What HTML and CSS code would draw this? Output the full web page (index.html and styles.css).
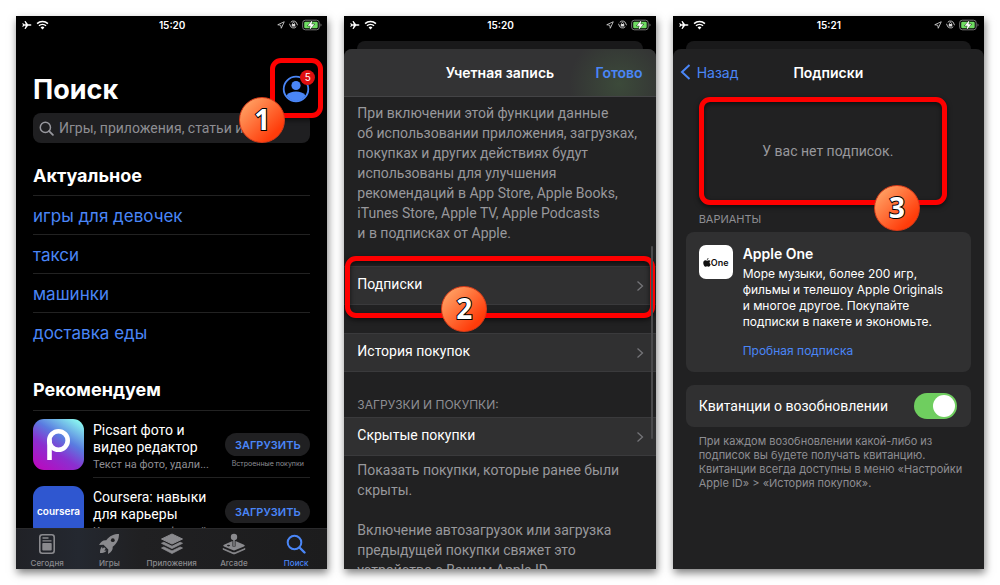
FILE: index.html
```html
<!DOCTYPE html>
<html lang="ru">
	<head>
		<meta charset="UTF-8">
		<title>Подписки</title>
		<link rel="stylesheet" href="styles.css">
	</head>
	
	<body>
		<!-- общие иконки -->
		<svg class="sprite">
			<symbol id="plane" viewBox="0 0 20 20">
				<path d="M19 10c0-1-1.500-1.500-3-1.500h-4L7 2H5l2.500 6.500H4L2 6H.8L1.800 10 .8 14H2l2-2.500h3.500L5 18h2l5-6.500h4c1.500 0 3-.5 3-1.500z" fill="#fff"/>
			</symbol>
			<symbol id="wifi" viewBox="0 0 24 18">
				<path d="M2 6.500a14.500 14.500 0 0 1 20 0M5.500 10.500a9.500 9.500 0 0 1 13 0" fill="none" stroke="#fff" stroke-width="2.800"/>
				<path d="M12 17.500l-3.600-3.800a5.200 5.200 0 0 1 7.200 0z" fill="#fff"/>
			</symbol>
			<symbol id="arrow" viewBox="0 0 16 16">
				<path d="M14.500 1.500L1.500 7.500l6 1 1 6z" fill="none" stroke="#ddd" stroke-width="1.600" stroke-linejoin="round"/>
			</symbol>
			<symbol id="lock" viewBox="0 0 18 18">
				<path d="M3.500 4.500A7.200 7.200 0 0 1 16 8M14.500 13.500A7.200 7.200 0 0 1 2 10M2 10l-1-2.500M16 8l1 2.500" fill="none" stroke="#ddd" stroke-width="1.700"/>
				<rect x="5.500" y="8.200" width="7" height="5" rx="1" fill="#ddd"/>
				<path d="M7 8.500V7a2 2 0 0 1 4 0v1.500" fill="none" stroke="#ddd" stroke-width="1.400"/>
			</symbol>
			<symbol id="battery" viewBox="0 0 20 12">
				<rect x=".7" y="1.200" width="16.500" height="9.600" rx="2.600" fill="none" stroke="#777"/>
				<rect x="2.200" y="2.700" width="13.500" height="6.600" rx="1.200" fill="#6fdc62"/>
				<path d="M18.500 4.500v3c.7-.3 1-.8 1-1.500s-.3-1.200-1-1.500z" fill="#777"/>
				<path d="M10.500 1L5.500 6.800h3L7.500 11l5-5.800h-3z" fill="#fff" stroke="#000" stroke-width=".8" paint-order="stroke"/>
			</symbol>
			<symbol id="next" viewBox="0 0 8 12">
				<path d="M1.500 1.500L6.500 6l-5 4.500" fill="none" stroke="#747478" stroke-width="1.300"/>
			</symbol>
			<symbol id="loupe" viewBox="0 0 20 20">
				<circle cx="8.500" cy="8.500" r="6.800" fill="none" stroke="currentColor" stroke-width="2"/>
				<path d="M13.500 13.500l5 5" stroke="currentColor" stroke-width="2.400" stroke-linecap="round"/>
			</symbol>
		</svg>
		
		<main class="phones">
			<!-- поиск -->
			<section class="phone">
				<div class="status">
					<span class="status-side">
						<svg width="10" height="10"><use href="#plane"/></svg>
						<svg width="13" height="10"><use href="#wifi"/></svg>
					</span>
					<span class="time">15:20</span>
					<span class="status-side right">
						<svg width="8" height="8"><use href="#arrow"/></svg>
						<svg width="9" height="9"><use href="#lock"/></svg>
						<svg width="20" height="12"><use href="#battery"/></svg>
					</span>
				</div>
				
				<div class="search-page">
					<div class="title-row">
						<h1>Поиск</h1>
						<div class="account">
							<button type="button" class="account-btn" aria-label="Учетная запись">
								<svg width="28" height="28" viewBox="0 0 28 28">
									<circle cx="14" cy="14" r="12.300" fill="none" stroke="#4a86f7" stroke-width="1.800"/>
									<circle cx="14" cy="10.500" r="4.600" fill="#4a86f7"/>
									<path d="M4.500 20.500c2-3 5.600-4 9.500-4s7.500 1 9.500 4C21.500 24 18 26 14 26s-7.500-2-9.500-5.500z" fill="#4a86f7"/>
								</svg>
							</button>
							<span class="count">5</span>
							<div class="frame frame1"></div>
							<span class="step step1">1</span>
						</div>
					</div>
					
					<label class="search">
						<svg width="15" height="15"><use href="#loupe"/></svg>
						<input type="text" placeholder="Игры, приложения, статьи и др." aria-label="Поиск">
					</label>
					
					<h2>Актуальное</h2>
					<ul class="trends">
						<li><a href="#">игры для девочек</a></li>
						<li><a href="#">такси</a></li>
						<li><a href="#">машинки</a></li>
						<li><a href="#">доставка еды</a></li>
					</ul>
					
					<h2 class="rec">Рекомендуем</h2>
					<ul class="apps">
						<li>
							<svg class="app-icon" width="51" height="51" viewBox="0 0 51 51">
								<defs>
									<linearGradient id="pic" x1="0.2" y1="1" x2="0.85" y2="0">
										<stop offset="0" stop-color="#b70cc0"/>
										<stop offset=".35" stop-color="#8b2fd0"/>
										<stop offset=".62" stop-color="#5a7be0"/>
										<stop offset="1" stop-color="#8af8f0"/>
									</linearGradient>
								</defs>
								<rect width="51" height="51" rx="11" fill="url(#pic)"/>
								<path d="M16.500 41V20.500" stroke="#fff" stroke-width="4.600" fill="none"/>
								<circle cx="25.500" cy="21.500" r="9.200" stroke="#fff" stroke-width="4.600" fill="none"/>
							</svg>
							<div class="app-body">
								<div class="app-text">
									<h3>Picsart фото и<br>видео редактор</h3>
									<p>Текст на фото, удали...</p>
								</div>
								<div class="app-get">
									<button type="button" class="get">ЗАГРУЗИТЬ</button>
									<small>Встроенные покупки</small>
								</div>
							</div>
						</li>
						<li>
							<div class="app-icon coursera">coursera</div>
							<div class="app-body">
								<div class="app-text">
									<h3>Coursera: навыки<br>для карьеры</h3>
									<p>Курсы для профессий</p>
								</div>
								<div class="app-get">
									<button type="button" class="get">ЗАГРУЗИТЬ</button>
									<small></small>
								</div>
							</div>
						</li>
					</ul>
				</div>
				
				<nav class="tabs">
					<a href="#">
						<svg width="24" height="22" viewBox="0 0 24 22">
							<rect x="4.800" y="1.800" width="14.400" height="18.400" rx="2.500" fill="none" stroke="#8a8a8e" stroke-width="1.600"/>
							<path d="M7.500 5h6M7.500 7.800h9" stroke="#8a8a8e" stroke-width="1.300"/>
							<rect x="7.300" y="10" width="9.400" height="7.500" rx=".8" fill="#8a8a8e"/>
						</svg>
						Сегодня
					</a>
					<a href="#">
						<svg width="24" height="22" viewBox="0 0 24 22">
							<path d="M22 1c-5 0-9.500 1.800-12.800 6.300C6 7 4 8.500 2 12l4.500-.3 4.800 4.800L11 21c3.500-2 5-4 4.700-7.200C20.200 10.500 22 6 22 1z" fill="#8a8a8e"/>
							<circle cx="15.800" cy="7.200" r="1.900" fill="#202022"/>
							<path d="M5.500 13.500c-2 1-2.500 3.500-2.500 6.500 3 0 5.500-.5 6.500-2.500-.9.200-1.600.2-2.300.1.400-.7.700-1.200 1.500-1.900l-1.500-1.500c-.6.600-1.200 1-2 1.400-.1-.6 0-1.300.3-2.100z" fill="#8a8a8e"/>
						</svg>
						Игры
					</a>
					<a href="#">
						<svg width="24" height="22" viewBox="0 0 24 22">
							<path d="M12 1l10.500 5L12 11 1.500 6z" fill="#8a8a8e" stroke="#8a8a8e" stroke-linejoin="round"/>
							<path d="M1.500 10.300l2.300-1L12 13.200l8.200-3.900 2.300 1L12 15.500zM1.500 15l2.300-1L12 17.900l8.200-3.900 2.300 1L12 20.500z" fill="#8a8a8e" stroke="#8a8a8e" stroke-width=".8" stroke-linejoin="round"/>
						</svg>
						Приложения
					</a>
					<a href="#">
						<svg width="24" height="22" viewBox="0 0 24 22">
							<path d="M10.500 8L2 11.700c-1 .5-1 1.200 0 1.700l8.500 3.700c1 .4 2 .4 3 0l8.500-3.700c1-.5 1-1.200 0-1.700L13.500 8v5.500h-3z" fill="#8a8a8e"/>
							<path d="M1 15.500v.8l10 4.400c.7.300 1.300.3 2 0l10-4.400v-.8l-9.500 4c-1 .4-2 .4-3 0z" fill="#8a8a8e" stroke="#8a8a8e" stroke-width=".8"/>
							<circle cx="12" cy="4" r="3.200" fill="#8a8a8e"/>
							<path d="M12 5v8" stroke="#8a8a8e" stroke-width="1.500"/>
							<ellipse cx="6.500" cy="12.600" rx="1.600" ry=".8" fill="#202022"/>
						</svg>
						Arcade
					</a>
					<a href="#" class="on">
						<svg width="20" height="22" viewBox="0 -1 20 22"><use href="#loupe" width="20" height="20"/></svg>
						Поиск
					</a>
				</nav>
			</section>
			
			<!-- учетная запись -->
			<section class="phone">
				<div class="status">
					<span class="status-side">
						<svg width="10" height="10"><use href="#plane"/></svg>
						<svg width="13" height="10"><use href="#wifi"/></svg>
					</span>
					<span class="time">15:20</span>
					<span class="status-side right">
						<svg width="8" height="8"><use href="#arrow"/></svg>
						<svg width="9" height="9"><use href="#lock"/></svg>
						<svg width="20" height="12"><use href="#battery"/></svg>
					</span>
				</div>
				<div class="behind"></div>
				<div class="sheet">
					<header class="bar bar-line">
						<span></span>
						<h2>Учетная запись</h2>
						<button type="button" class="done">Готово</button>
					</header>
					
					<p class="note">При включении этой функции данные<br>об использовании приложения, загрузках,<br>покупках и других действиях будут<br>использованы для улучшения<br>рекомендаций в App Store, Apple Books,<br>iTunes Store, Apple TV, Apple Podcasts<br>и в подписках от Apple.</p>
					
					<div class="marked">
						<a href="#" class="row">Подписки <svg width="8" height="12"><use href="#next"/></svg></a>
						<div class="frame frame2"></div>
						<span class="step step2">2</span>
					</div>
					<a href="#" class="row">История покупок <svg width="8" height="12"><use href="#next"/></svg></a>
					
					<h3 class="group">ЗАГРУЗКИ И ПОКУПКИ:</h3>
					<a href="#" class="row">Скрытые покупки <svg width="8" height="12"><use href="#next"/></svg></a>
					<p class="note after">Показать покупки, которые ранее были<br>скрыты.</p>
					<p class="note last">Включение автозагрузок или загрузка<br>предыдущей покупки свяжет это<br>устройство с Вашим Apple ID</p>
					<span class="scroll"></span>
				</div>
			</section>
			
			<!-- подписки -->
			<section class="phone">
				<div class="status">
					<span class="status-side">
						<svg width="10" height="10"><use href="#plane"/></svg>
						<svg width="13" height="10"><use href="#wifi"/></svg>
					</span>
					<span class="time">15:21</span>
					<span class="status-side right">
						<svg width="8" height="8"><use href="#arrow"/></svg>
						<svg width="9" height="9"><use href="#lock"/></svg>
						<svg width="20" height="12"><use href="#battery"/></svg>
					</span>
				</div>
				<div class="behind"></div>
				<div class="sheet">
					<header class="bar">
						<a href="#" class="back">
							<svg width="11" height="16" viewBox="0 0 11 16"><path d="M9.500 1L2 8l7.500 7" fill="none" stroke="#4a86f7" stroke-width="2"/></svg>
							Назад
						</a>
						<h2>Подписки</h2>
						<span></span>
					</header>
					
					<div class="empty">
						<p>У вас нет подписок.</p>
						<span class="step step3">3</span>
					</div>
					
					<h3 class="group variants">ВАРИАНТЫ</h3>
					<div class="card offer">
						<div class="one">
							<svg width="8" height="9" viewBox="0 0 16 18">
								<path d="M11 0c.1 2-1.500 3.700-3.300 3.700C7.500 2 9.200.2 11 0zM14.800 6.200c-2.400 1.600-2 5 .6 6.200-.8 2.400-2.400 5-4 5-1.200 0-1.700-.7-3.100-.7s-2 .7-3.100.7C3 17.400.5 13.500.5 9.900c0-3.400 2-5.300 4.200-5.300 1.400 0 2.500.9 3.500.9.900 0 2.200-1 3.900-1 1 0 2.100.5 2.700 1.700z" fill="#111"/>
							</svg>One
						</div>
						<div class="offer-text">
							<h4>Apple One</h4>
							<p>Море музыки, более 200 игр,<br>фильмы и телешоу Apple Originals<br>и многое другое. Покупайте<br>подписки в пакете и экономьте.</p>
							<a href="#">Пробная подписка</a>
						</div>
					</div>
					
					<label class="card receipts">
						Квитанции о возобновлении
						<input type="checkbox" class="switch" checked>
					</label>
					<p class="hint">При каждом возобновлении какой-либо из<br>подписок вы будете получать квитанцию.<br>Квитанции всегда доступны в меню «Настройки<br>Apple ID» &gt; «История покупок».</p>
				</div>
			</section>
		</main>
	</body>
</html>
```

FILE: styles.css
```css
*{
	margin: 0;
	padding: 0;
	box-sizing: border-box;
}
body{
	background: #fff;
	font-family: Inter, "Liberation Sans", sans-serif;
	font-size: 14px;
	color: #fff;
}
ul{
	list-style: none;
}
a{
	color: #4a86f7;
	text-decoration: none;
}
button{
	border: 0;
	background: none;
	font-family: inherit;
	color: #4a86f7;
}
svg{
	display: block;
	flex: none;
}
.sprite{
	position: absolute;
	width: 0;
	height: 0;
}

/* три экрана */
.phones{
	display: grid;
	grid-template-columns: repeat(3, 1fr);
	gap: 17px;
	height: 100vh;
	padding: 16px;
}
.phone{
	display: flex;
	flex-direction: column;
	min-width: 0;
	overflow: hidden;
	background: #000;
	box-shadow: 1px 4px 8px rgba(0,0,0,.5);
}
.status{
	display: grid;
	grid-template-columns: 1fr auto 1fr;
	align-items: center;
	flex: none;
	height: 17px;
	padding: 0 5px 0 6px;
}
.status-side{
	display: flex;
	align-items: center;
	gap: 4px;
}
.right{
	justify-content: flex-end;
}
.time{
	font-size: 10px;
	font-weight: 600;
}

/* поиск */
.search-page{
	flex: 1;
	min-height: 0;
	overflow: hidden;
	padding: 40px 17px 0;
}
.title-row{
	display: flex;
	justify-content: space-between;
	align-items: center;
	height: 32px;
	margin-bottom: 8px;
}
h1{
	padding-top: 2px;
	font-size: 27px;
	line-height: 32px;
}
.account{
	position: relative;
	width: 28px;
	height: 28px;
}
.account-btn{
	display: block;
}
.count{
	position: absolute;
	top: -5px;
	right: -5px;
	width: 15px;
	height: 15px;
	border-radius: 50%;
	background: #e01010;
	font-size: 10px;
	line-height: 15px;
	text-align: center;
}
.search{
	display: flex;
	align-items: center;
	gap: 5px;
	height: 30px;
	padding: 0 6px;
	border-radius: 8px;
	background: #1f1f21;
	color: #98989e;
}
.search input{
	flex: 1;
	min-width: 0;
	border: 0;
	outline: 0;
	background: none;
	color: #fff;
	font: 14px Roboto, "Liberation Sans", sans-serif;
}
.search input::placeholder{
	color: #8e8e93;
}
.search-page h2{
	margin-top: 22px;
	padding-bottom: 8px;
	font-size: 18px;
	line-height: 22px;
}
.trends li{
	height: 39px;
	border-top: 1px solid #222;
	font-size: 17px;
	line-height: 40px;
}
.search-page .rec{
	margin-top: 28px;
	padding-bottom: 9px;
}
.apps li{
	display: flex;
	gap: 9px;
	height: 68px;
}
.apps li:first-child{
	border-top: 1px solid #222;
}
.app-icon{
	flex: none;
	width: 51px;
	height: 51px;
	margin-top: 8px;
}
.coursera{
	border-radius: 11px;
	background: #2f57d0;
	font-size: 10px;
	font-weight: 600;
	line-height: 50px;
	text-align: center;
}
.app-body{
	display: flex;
	flex: 1;
	justify-content: space-between;
	min-width: 0;
	border-bottom: 1px solid #222;
}
.app-text{
	padding-top: 11px;
	font-family: Roboto, "Liberation Sans", sans-serif;
	white-space: nowrap;
}
.app-text h3{
	font-size: 14px;
	font-weight: 400;
	line-height: 17px;
}
.app-text p{
	font-size: 11px;
	line-height: 17px;
	color: #8e8e93;
}
.app-get{
	width: 85px;
	padding-top: 22px;
	text-align: center;
}
.get{
	display: block;
	width: 85px;
	height: 23px;
	border-radius: 12px;
	background: #202022;
	font-size: 11px;
	font-weight: 600;
}
.app-get small{
	display: block;
	font-size: 7px;
	line-height: 16px;
	white-space: nowrap;
	color: #8e8e93;
}
.tabs{
	display: grid;
	grid-template-columns: repeat(5, 1fr);
	flex: none;
	height: 41px;
	border-top: 1px solid #2a2a2c;
	background: linear-gradient(90deg, #202126, #242830 20%, #202022 40%, #1c1c1d);
}
.tabs a{
	display: flex;
	flex-direction: column;
	align-items: center;
	gap: 2px;
	padding-top: 4px;
	font-size: 8px;
	font-weight: 500;
	line-height: 12px;
	color: #8a8a8e;
}
.tabs .on{
	color: #4a86f7;
}

/* карточка поверх экрана */
.behind{
	flex: none;
	height: 8px;
	margin: 8px 13px 0;
	border-radius: 8px 8px 0 0;
	background: #19191a;
}
.sheet{
	position: relative;
	flex: 1;
	min-height: 0;
	overflow: hidden;
	border-radius: 8px 8px 0 0;
	background: #212122;
}
.bar{
	display: grid;
	grid-template-columns: 1fr auto 1fr;
	align-items: center;
	height: 48px;
	padding: 0 13px 2px 13px;
}
.bar-line{
	padding-bottom: 0;
	border-bottom: 1px solid #444446;
	background: radial-gradient(circle at 275px 35px, #3c4a3a, #333334 50px);
}
.bar h2{
	font-size: 14px;
	font-weight: 600;
}
.done{
	justify-self: end;
	font-size: 14px;
	font-weight: 600;
}
.back{
	display: flex;
	align-items: center;
	gap: 6px;
	margin-left: -6px;
}
.note{
	padding: 6px 13px 0;
	font: 14px/20px Roboto, "Liberation Sans", sans-serif;
	white-space: nowrap;
	color: #98989c;
}
.marked{
	position: relative;
	margin: 23px 0 28px;
}
.row{
	display: flex;
	justify-content: space-between;
	align-items: center;
	height: 39px;
	padding: 0 12px 3px 13px;
	border: solid #3a3a3c;
	border-width: 1px 0;
	background: #303031;
	font-family: Roboto, "Liberation Sans", sans-serif;
	color: #fff;
}
.row svg{
	margin-top: 3px;
}
.group{
	padding: 25px 13px 4px;
	font-size: 12px;
	font-weight: 400;
	line-height: 16px;
	color: #8e8e93;
}
.after{
	padding-top: 4px;
}
.last{
	padding-top: 20px;
}
.scroll{
	position: absolute;
	top: 197px;
	right: 3px;
	width: 2px;
	height: 193px;
	border-radius: 1px;
	background: #4a4a4c;
}

/* подписки */
.empty{
	position: relative;
	display: flex;
	align-items: center;
	justify-content: center;
	height: 108px;
	margin: 0 37px 0 26px;
	border: 5px solid #fe0000;
	border-radius: 11px;
	box-shadow: 0 2px 5px rgba(0,0,0,.6), inset 0 2px 5px rgba(0,0,0,.6);
	font-family: Roboto, "Liberation Sans", sans-serif;
	color: #98989c;
}
.empty p{
	padding-left: 10px;
}
.variants{
	padding: 6px 26px 5px;
	font-size: 11px;
}
.card{
	display: flex;
	margin: 0 13px 13px;
	padding: 13px;
	border-radius: 8px;
	background: #303031;
}
.offer{
	gap: 10px;
	height: 140px;
}
.one{
	display: flex;
	flex: none;
	align-items: center;
	justify-content: center;
	width: 34px;
	height: 34px;
	border-radius: 7px;
	background: #fff;
	color: #111;
	font-size: 9px;
	font-weight: 600;
}
.offer-text{
	font-size: 12px;
	line-height: 16px;
	white-space: nowrap;
}
.offer-text h4{
	padding-bottom: 3px;
	font-size: 14px;
	font-weight: 600;
	line-height: 18px;
}
.offer-text a{
	display: block;
	padding-top: 13px;
}
.receipts{
	align-items: center;
	justify-content: space-between;
	height: 42px;
	padding: 0 14px 0 13px;
	font-family: Roboto, "Liberation Sans", sans-serif;
	white-space: nowrap;
}
.switch{
	appearance: none;
	display: flex;
	justify-content: flex-end;
	width: 43px;
	height: 26px;
	padding: 2px;
	border-radius: 13px;
	background: #6fce5f;
}
.switch::before{
	content: "";
	width: 22px;
	height: 22px;
	border-radius: 50%;
	background: #fff;
}
.switch:not(:checked){
	justify-content: flex-start;
	background: #555;
}
.hint{
	padding: 0 26px;
	margin-top: -6px;
	font-size: 11px;
	line-height: 14px;
	white-space: nowrap;
	color: #8e8e93;
}

/* красные рамки и номера шагов */
.frame{
	position: absolute;
	border: 5px solid #fe0000;
	border-radius: 11px;
	box-shadow: 0 2px 5px rgba(0,0,0,.6), inset 0 2px 5px rgba(0,0,0,.6);
	pointer-events: none;
}
.frame1{
	top: -17px;
	left: -12px;
	width: 53px;
	height: 60px;
}
.frame2{
	top: -10px;
	left: 1px;
	right: 1px;
	height: 62px;
}
.step{
	position: absolute;
	z-index: 1;
	width: 46px;
	height: 46px;
	border: 1px solid #d83a18;
	border-radius: 50%;
	background: linear-gradient(135deg, #ff9a5e 15%, #ff3c0a 80%);
	color: #fff;
	font: 700 28px/43px "Open Sans", "Noto Sans", sans-serif;
	text-align: center;
	-webkit-text-stroke: 2px #000;
	paint-order: stroke fill;
}
.step1{
	top: 22px;
	left: -43px;
}
.step2{
	top: 20px;
	left: 97px;
}
.step3{
	right: 22px;
	bottom: -31px;
}
```
